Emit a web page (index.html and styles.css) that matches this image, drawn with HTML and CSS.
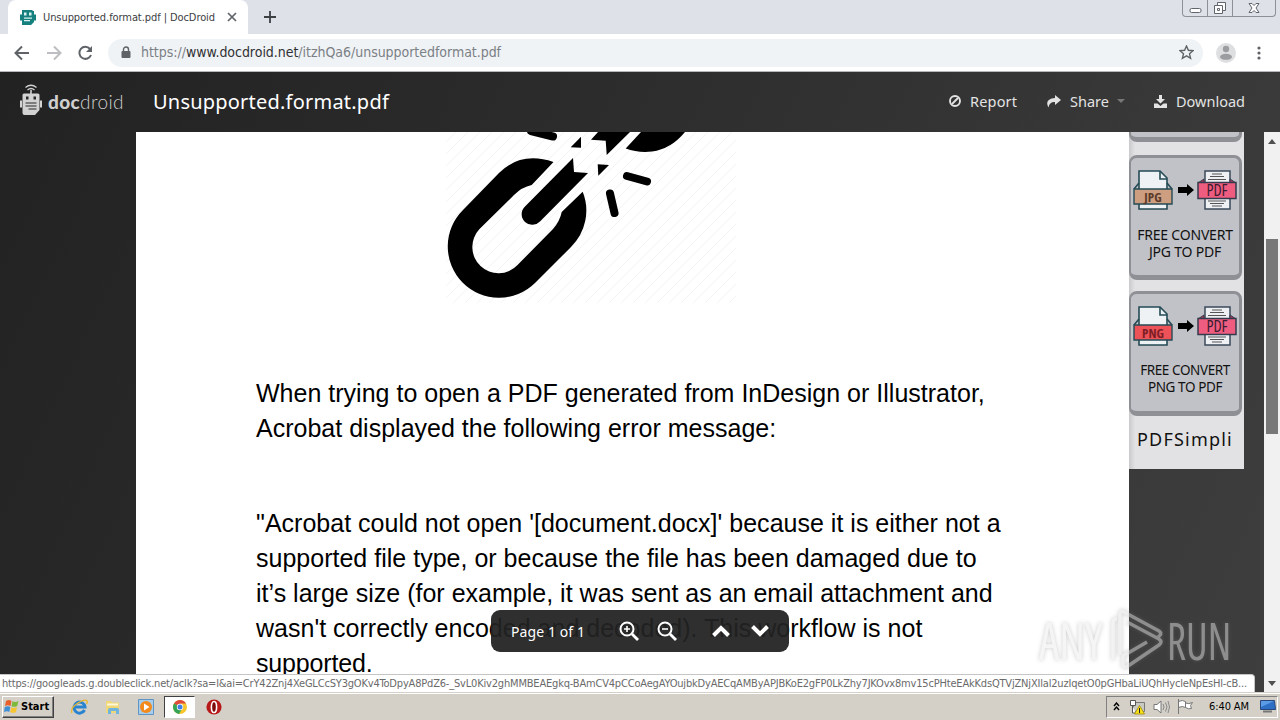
FILE: index.html
```html
<!DOCTYPE html>
<html lang="en">
<head>
<meta charset="utf-8">
<title>Unsupported.format.pdf | DocDroid</title>
<link rel="stylesheet" href="styles.css">
</head>
<body>
<svg class="defs" width="0" height="0">
  <defs>
    <symbol id="robot" viewBox="0 0 22 32">
      <path d="M5.500 3.500Q11 -1 16.500 3.500M7.500 6Q11 3 14.500 6" fill="none" stroke="currentColor" stroke-width="1.300"/>
      <path d="M10.200 6h1.600v4h-1.600zM4 9.500h14q1.500 0 1.500 1.500v15l-4.500 5H4.500q-2 0-2-2V11q0-1.500 1.500-1.500zM0 16.500h2v7H0zM20 16.500h2v7h-2z" fill="currentColor"/>
      <path d="M6 12.500h2.500v3H6zM13.500 12.500H16v3h-2.500zM5.500 18.500h11v1h-11zM5.500 21.500h11v1h-11zM8.500 24.500h8v1h-8z"/>
    </symbol>
    <symbol id="robot-small" viewBox="0 0 16 17">
      <path d="M2 1h10.500v1h1.500v11l-3 3H2zM0 5.500h16v6H0z" fill="currentColor"/>
      <path d="M4 3.500h2.500v3H4zM9 3.500h2.500v3H9zM4 8.500h8v1.200H4zM4 11h6v1.200H4z"/>
    </symbol>
    <symbol id="pdf" viewBox="0 0 40 40">
      <path d="M8 1h25v38H8z" fill="#eef0f3" stroke="#3b4a5c" stroke-width="1.500"/>
      <path d="M15 4h10M13 6.500h14M11 9.500h18M11 31h18M13 33.500h14M15 36h10" stroke="#555" stroke-width="1.200"/>
      <path d="M1 13l6-4v4M39 13l-6-4v4" fill="#b5375a" stroke="#333b4c"/>
      <path d="M1 12.500h38v16H1z" fill="#ee5d80" stroke="#333b4c" stroke-width="1.500"/>
    </symbol>
    <symbol id="file" viewBox="0 0 40 40">
      <path d="M6 1h21l7 7v31H6z" fill="#eef2f4" stroke="#254b55" stroke-width="1.600"/>
      <path d="M27 1v8h7M1 19l5-6M39 19l-5-6" fill="none" stroke="#254b55" stroke-width="1.600"/>
      <path d="M1 19h38v15H1z" fill="currentColor" stroke="#254b55" stroke-width="1.400"/>
    </symbol>
  </defs>
</svg>

<div class="tabstrip">
  <div class="tab">
    <svg class="favicon" width="16" height="17"><use href="#robot-small"/></svg>
    <span class="tab-title">Unsupported.format.pdf | DocDroid</span>
    <svg class="tab-close" width="10" height="10" viewBox="0 0 10 10"><path d="M1 1l8 8M9 1l-8 8" stroke="#5f6368" stroke-width="1.700"/></svg>
  </div>
  <svg class="newtab" width="12" height="12" viewBox="0 0 12 12"><path d="M6 0v12M0 6h12" stroke="#3c4043" stroke-width="1.800"/></svg>
  <div class="winbtns">
    <span class="wb wb-s"><svg width="13" height="16" viewBox="0 0 13 16"><rect x="1" y="8.500" width="11" height="4" rx="1.500" fill="#fff" stroke="#62656e"/></svg></span>
    <span class="wb wb-s"><svg width="14" height="16" viewBox="0 0 14 16"><path d="M4.500 2.500h8v8h-8z" fill="#fff" stroke="#62656e"/><path d="M1.500 5.500h8v8h-8zM4.500 8.500h2v2h-2z" fill="#fff" stroke="#62656e"/></svg></span>
    <span class="wb wb-l"><svg width="12" height="16" viewBox="0 0 12 16"><path d="M1 3.500h3l2 2 2-2h3L8 8l3 4.500H8l-2-2-2 2H1L4 8z" fill="#fff" stroke="#62656e"/></svg></span>
  </div>
</div>

<div class="toolbar">
  <svg class="nav" width="84" height="20" viewBox="0 0 84 20">
    <g fill="none" stroke="#5f6368" stroke-width="2"><path d="M15 10H2M8 3.500L1.500 10 8 16.500"/><path d="M33 10h13M40 3.500l6.500 6.500-6.500 6.500" stroke="#bcbec1"/><path d="M76 6A6 6 0 1 0 77 12"/></g>
    <path d="M78 3v6h-6z" fill="#5f6368"/>
  </svg>
  <div class="omnibox">
    <svg width="10" height="13" viewBox="0 0 10 13"><path d="M2.500 6V3.500a2.500 2.500 0 0 1 5 0V6" fill="none" stroke="#5f6368" stroke-width="1.400"/><rect x=".5" y="5" width="9" height="7" rx="1" fill="#5f6368"/></svg>
    <span class="url">https://<b>www.docdroid.net</b>/itzhQa6/unsupportedformat.pdf</span>
    <svg class="star" width="15" height="15" viewBox="0 0 15 15"><path d="M7.500 1l1.900 4.300 4.700.4-3.600 3.100 1.100 4.600-4.100-2.500-4.100 2.500 1.100-4.600L.9 5.700l4.700-.4z" fill="none" stroke="#5f6368" stroke-width="1.400"/></svg>
  </div>
  <svg width="20" height="20" viewBox="0 0 20 20"><circle cx="10" cy="10" r="10" fill="#dedfe1"/><circle cx="10" cy="6" r="3.200" fill="#9b9da0"/><ellipse cx="10" cy="13.800" rx="6" ry="3" fill="#9b9da0"/></svg>
  <svg class="dots" width="4" height="14" viewBox="0 0 4 14"><g fill="#5f6368"><circle cx="2" cy="2" r="1.600"/><circle cx="2" cy="7" r="1.600"/><circle cx="2" cy="12" r="1.600"/></g></svg>
</div>

<main class="viewer">
  <header class="docbar">
    <svg class="logo" width="22" height="32"><use href="#robot"/></svg>
    <span class="brand"><b>doc</b>droid</span>
    <h1 class="title">Unsupported.format.pdf</h1>
    <nav class="actions">
      <svg width="12" height="12" viewBox="0 0 12 12"><circle cx="6" cy="6" r="5" fill="none" stroke="currentColor" stroke-width="1.900"/><path d="M3 9l6-6" stroke="currentColor" stroke-width="1.800"/></svg>
      <span class="act a-report">Report</span>
      <svg width="15" height="13" viewBox="0 0 15 13"><path d="M9 0l6 5-6 5V7Q3.500 6.500 2.500 12.500 -2 4 9 3z" fill="currentColor"/></svg>
      <span class="act a-share">Share</span>
      <svg class="caret" width="8" height="4" viewBox="0 0 8 4"><path d="M0 0h8L4 4z" fill="#777"/></svg>
      <svg width="13" height="13" viewBox="0 0 13 13"><path d="M5 0h3v4h3L6.500 8.500 2 4h3zM0 8.500h3.500l3 2.500 3-2.500H13V13H0z" fill="currentColor"/></svg>
      <span class="act a-dl">Download</span>
    </nav>
  </header>
  <div class="stage">
    <article class="paper">
      <svg class="chain" width="290" height="171" viewBox="446 132 290 171">
        <defs><pattern id="hatch" width="12" height="12" patternUnits="userSpaceOnUse"><path d="M-1 13L13 -1" stroke="#f4f4f4" stroke-width="1"/></pattern></defs>
        <path d="M446 132h290v171H446z" fill="url(#hatch)"/>
        <path d="M553.500 162Q521 151 499 173L463 210A51 51 0 0 0 535 283L571 247A51 51 0 0 0 582.700 191.700L561.700 212Q560 221 553 229L517.500 265A26 26 0 0 1 479.500 229L514 195Q522 187 531.700 185Z"/>
        <path d="M573 158L524.500 207A10.500 10.500 0 0 0 540 221.500L588 173 574 172Z"/>
        <path d="M570.700 147.300L581 136.700V147.700ZM597.700 164.300L609 165 598.300 175.700ZM598 132H630L606.700 155 605.700 140.700 591 139.700ZM641 132L625.700 148.500Q638 153 652 151.500 671 149 685 132Z"/>
        <path d="M627 176L647 181.500M610 193.500L614.500 213M531 131L553 136.500" stroke="#000" stroke-width="8" stroke-linecap="round"/>
      </svg>
      <p class="para"><span>When trying to open a PDF generated from InDesign or Illustrator,</span><br><span>Acrobat displayed the following error message:</span></p>
      <p class="para"><span>"Acrobat could not open '[document.docx]' because it is either not a</span><br><span>supported file type, or because the file has been damaged due to</span><br><span>it’s large size (for example, it was sent as an email attachment and</span><br><span>wasn't correctly encoded and decoded). This workflow is not</span><br><span class="last">supported.</span></p>
    </article>
    <aside class="ad">
      <div class="card card-cut"></div>
      <div class="card">
        <div class="convert"><span class="fmt jpg"><svg width="40" height="40"><use href="#file"/></svg><i>JPG</i></span><svg class="arrow" width="16" height="12" viewBox="0 0 16 12"><path d="M0 3h9V0l7 6-7 6V9H0z"/></svg><span class="fmt pdf"><svg width="40" height="40"><use href="#pdf"/></svg><i>PDF</i></span></div>
        <div class="cap">FREE CONVERT<br>JPG TO PDF</div>
      </div>
      <div class="card card-png">
        <div class="convert"><span class="fmt png"><svg width="40" height="40"><use href="#file"/></svg><i>PNG</i></span><svg class="arrow" width="16" height="12" viewBox="0 0 16 12"><path d="M0 3h9V0l7 6-7 6V9H0z"/></svg><span class="fmt pdf"><svg width="40" height="40"><use href="#pdf"/></svg><i>PDF</i></span></div>
        <div class="cap">FREE CONVERT<br>PNG TO PDF</div>
      </div>
      <div class="simpli">PDFSimpli</div>
    </aside>
    <div class="scrollbar">
      <svg width="8" height="5" viewBox="0 0 8 5"><path d="M0 5l4-5 4 5z" fill="#505050"/></svg>
      <div class="thumb"></div>
      <svg class="down" width="8" height="5" viewBox="0 0 8 5"><path d="M0 0l4 5 4-5z" fill="#505050"/></svg>
    </div>
  </div>
  <div class="pager">
    <span class="pg">Page 1 of 1</span>
    <svg class="zi" width="20" height="20" viewBox="0 0 20 20"><g fill="none" stroke="#fff" stroke-width="2"><circle cx="8" cy="8" r="6.500"/><path d="M13 13l6 6" stroke-width="2.800"/><path d="M8 5v6M5 8h6" stroke-width="1.600"/></g></svg>
    <svg class="zo" width="20" height="20" viewBox="0 0 20 20"><g fill="none" stroke="#fff" stroke-width="2"><circle cx="8" cy="8" r="6.500"/><path d="M13 13l6 6" stroke-width="2.800"/><path d="M5 8h6" stroke-width="1.600"/></g></svg>
    <svg class="up" width="18" height="12" viewBox="0 0 18 12"><path d="M1.500 10.500L9 3l7.500 7.500" fill="none" stroke="#fff" stroke-width="4"/></svg>
    <svg class="dn" width="18" height="12" viewBox="0 0 18 12"><path d="M1.500 1.500L9 9l7.500-7.500" fill="none" stroke="#fff" stroke-width="4"/></svg>
  </div>
  <div class="watermark">
    <span class="wm wm-any">ANY</span>
    <svg width="54" height="62" viewBox="0 0 54 62"><defs><linearGradient id="wmg" gradientUnits="userSpaceOnUse" x1="0" y1="0" x2="54" y2="0"><stop offset="0" stop-color="#f0f0f0"/><stop offset=".34" stop-color="#e8e8e8"/><stop offset=".36" stop-color="#aaa"/></linearGradient></defs><g fill="none" stroke="url(#wmg)" stroke-width="3.500" stroke-linejoin="round"><path d="M3 51V14q0-4 4-4M10 46V5q0-4 4-2l35 19q4 3-1 6"/><path d="M17 13l32 17q4 3 0 6L18 57q-5 3-5-2v-8l24-14"/></g></svg>
    <span class="wm wm-run">RUN</span>
  </div>
  <div class="status">https://googleads.g.doubleclick.net/aclk?sa=l&amp;ai=CrY42Znj4XeGLCcSY3gOKv4ToDpyA8PdZ6-_SvL0Kiv2ghMMBEAEgkq-BAmCV4pCCoAegAYOujbkDyAECqAMByAPJBKoE2gFP0LkZhy7JKOvx8mv15cPHteEAkKdsQTVjZNjXIlal2uzIqetO0pGHbaLiUQhHycleNpEsHl-cB...</div>
</main>

<footer class="taskbar">
  <div class="start">
    <svg width="16" height="15" viewBox="0 0 16 15"><path d="M2 2q3-2 5.500 0L6.500 7Q3.500 5.500 1 7z" fill="#e8612c"/><path d="M8.500 2.300q3 1.700 6-.3L13.200 7q-3 1.700-5.700 0z" fill="#7fb93c"/><path d="M.8 8q3-1.500 5.500 0L5.300 13Q3 11.500 0 13z" fill="#3f8fd6"/><path d="M7.300 8.300q2.700 1.500 5.700-.2L12 13q-3 1.700-5.700 0z" fill="#f6c52f"/></svg>
    <b>Start</b>
  </div>
  <div class="quick">
    <svg class="q1" width="17" height="16" viewBox="0 0 17 16"><path d="M13.500 11A5.500 5.500 0 1 1 14 8H4" fill="none" stroke="#2a83cf" stroke-width="3"/><path d="M1 14Q-1 9 7 4q7-4.500 9-2 .8 1-.5 3" fill="none" stroke="#e9b52c" stroke-width="1.300"/></svg>
    <svg class="q2" width="16" height="16" viewBox="0 0 16 16"><path d="M1 2h5l1 1.500h7V14H1z" fill="#f0d878"/><path d="M2 4.500h11v2H2z" fill="#fff8d8"/><path d="M3 15v-4q0-2 2-2h7q2 0 2 2v4h-3v-3H6v3z" fill="#6fb4dc"/></svg>
    <svg class="q3" width="16" height="16" viewBox="0 0 16 16"><path d="M.5.500h15v15H.5z" fill="#a8cdea" stroke="#5e95c4"/><circle cx="8" cy="8" r="6" fill="#f28a1c"/><path d="M6 4.500L11.500 8 6 11.500z" fill="#fff"/></svg>
    <span class="running"><svg width="14" height="14" viewBox="0 0 14 14"><circle cx="7" cy="7" r="7" fill="#f6c62c"/><path d="M7 7L1 3.500A7 7 0 0 1 13 3.500H7z" fill="#de4a3c"/><path d="M7 7L1 3.500A7 7 0 0 0 6 14L9 9z" fill="#35a455"/><circle cx="7" cy="7" r="3.200" fill="#fff"/><circle cx="7" cy="7" r="2.500" fill="#3f7fe6"/></svg></span>
    <svg class="q5" width="16" height="16" viewBox="0 0 16 16"><circle cx="8" cy="8" r="7.600" fill="#b81a1a"/><ellipse cx="8" cy="8" rx="2.600" ry="5.500" fill="#7d0b0b" stroke="#fff" stroke-width="1.600"/></svg>
  </div>
  <div class="tray">
    <svg width="7" height="9" viewBox="0 0 7 9"><path d="M1 4l2.500-3L6 4M1 8l2.500-3L6 8" fill="none" stroke="#000" stroke-width="1.400"/></svg>
    <svg class="t2" width="17" height="16" viewBox="0 0 17 16"><path d="M4.500 3.500h11v9h-11z" fill="#c9c9c4" stroke="#777"/><path d="M1.500 1.500h5v5h-5zM3.500 6v8h3" fill="#fff" stroke="#555"/><path d="M10.500 6.500L15.500 15h-10z" fill="#f8e11c" stroke="#a18c00" stroke-width=".8"/><path d="M10.500 9v5" stroke="#222"/></svg>
    <svg class="t3" width="17" height="14" viewBox="0 0 17 14"><path d="M1 4.500h3L8 1v12L4 9.500H1z" fill="#fff" stroke="#777"/><path d="M10 4q2 3 0 6M12.500 2.500q3 4.500 0 9M15 1q3 6 0 12" fill="none" stroke="#888"/></svg>
    <svg class="t4" width="17" height="15" viewBox="0 0 17 15"><path d="M1.500 0v15M1.500 2.500q4-2 7 0v6q-3-2-7 0zM8.500 4q3 1.500 7-.5l-2 3 1 3q-3 1-6-1" fill="#fff" stroke="#777"/></svg>
    <span class="clock">6:40 AM</span>
    <svg class="t5" width="16" height="13" viewBox="0 0 16 13"><path d="M.5.500h14l1 9H.5z" fill="#2d6fc4" stroke="#26477c"/><path d="M1 1h13L1 7z" fill="#5b9be6"/><path d="M3 11.500h9" stroke="#777" stroke-width="2"/></svg>
  </div>
</footer>
</body>
</html>
```
FILE: styles.css
```css
*{box-sizing:border-box}
body{margin:0;width:1280px;height:720px;overflow:hidden;display:flex;flex-direction:column;font-family:"DejaVu Sans Condensed","DejaVu Sans",sans-serif;font-size:11px;background:#fff}
svg{display:block;flex:none}
.defs{position:absolute}
span{white-space:nowrap}
.tabstrip{height:34px;background:#dee1e8;display:flex;align-items:flex-start;flex:none}
.tab{margin-left:8px;width:240px;height:34px;background:#fff;border-radius:8px 8px 0 0;display:flex;align-items:center;padding-left:12px}
.favicon{color:#16807f;fill:#d9f3f0}
.tab-title{margin-left:7px;color:#3c4043;letter-spacing:-.075px}
.tab-close{margin-left:auto;margin-right:11px}
.newtab{margin:11px 0 0 16px}
.winbtns{margin-left:auto;margin-right:4px;display:flex;border:1px solid #8d9099;border-top:0;border-radius:0 0 4px 4px;height:17px}
.wb{display:flex;justify-content:center}
.wb-s{width:25px;border-right:1px solid #8d9099}
.wb-l{width:42px}
.toolbar{height:38px;border-bottom:1px solid #b5b7ba;display:flex;align-items:center;flex:none;padding-left:14px}
.nav{margin-right:10px}
.omnibox{width:1095px;height:28px;border-radius:14px;background:#f0f3f5;display:flex;align-items:center;padding:0 9px 0 13px;margin-right:13px}
.url{margin:-2px 0 0 10px;font:400 14px "DejaVu Sans Condensed","DejaVu Sans",sans-serif;color:#7b8085;letter-spacing:-.033px}
.url b{font-weight:400;color:#303134}
.star{margin-left:auto}
.dots{margin-left:21px}
.viewer{flex:1;min-height:0;position:relative;display:flex;flex-direction:column;background:linear-gradient(115deg,#222 0%,#2b2b2b 35%,#383838 75%,#3e3e3e 100%)}
.docbar{height:60px;flex:none;display:flex;align-items:center;padding-left:20px;color:#e3e3e3}
.logo{fill:#282828;color:#d2d2d2;margin-top:-4px}
.brand{margin:-2px 0 0 6px;width:77px;font:300 19px Lato,sans-serif;color:#cfcfcf;letter-spacing:.35px}
.brand b{font-weight:900}
.title{margin:-1px 0 0 28px;font:400 20px "Noto Sans",sans-serif;color:#fff;letter-spacing:.215px}
.actions{margin:-2px 35px 0 auto;display:flex;align-items:center}
.act{font:14.500px "Noto Sans",sans-serif;margin-left:9px}
.a-report{margin-right:29px;letter-spacing:.14px}
.a-share{margin-right:8px}
.caret{margin-right:29px}
.stage{flex:1;min-height:0;display:flex;padding-left:136px;overflow:hidden}
.paper{width:993px;background:#fff;padding-left:120px;flex:none}
.chain{margin-left:190px}
.para{margin:73px 0 0;font:25px/35px "Liberation Sans",Arial,sans-serif;color:#000;letter-spacing:.01px}
.para + .para{margin-top:60px}
.last{letter-spacing:-.15px}
.ad{width:115px;height:337px;background:linear-gradient(90deg,#c9c9cb,#e2e2e4 6px);flex:none}
.card{width:113px;height:125px;background:#c1c2c7;border:3px solid #8f9095;border-bottom-width:5px;border-left-width:2px;border-radius:8px;margin-bottom:11px}
.card-cut{height:10px;border-top:0;border-radius:0 0 8px 8px;margin-bottom:13px}
.convert{display:flex;align-items:center;padding:12px 0 0 2px}
.arrow{margin:0 3px 0 5px}
.fmt{position:relative}
.fmt i{position:absolute;left:0;width:40px;text-align:center;font:700 13px/14px "Open Sans",sans-serif;font-stretch:75%;top:20px;color:#5a3a2a}
.jpg{color:#cd9e80}.png{color:#ec5257}
.png i{color:#7e1d25}
.fmt.pdf i{top:13px;font-weight:500;font-size:16px;line-height:15px;color:#3b1c31}
.cap{font:14px/17px "Noto Sans",sans-serif;text-align:center;margin-top:16px;color:#111;letter-spacing:-.2px}
.card-png .cap{font-size:13.500px;letter-spacing:-.4px}
.simpli{font:18px/24px "Noto Sans",sans-serif;margin:11px 0 0 8px;color:#111;letter-spacing:1.2px}
.scrollbar{margin-left:auto;width:16px;background:#f1f1f1;display:flex;flex-direction:column;align-items:center;padding:7px 0 6px}
.thumb{width:12px;height:195px;flex:none;background:#787878;margin-top:95px}
.down{margin-top:auto}
.pager{position:absolute;left:491px;top:538px;width:298px;height:42px;border-radius:9px;background:rgba(34,34,34,.94);display:flex;align-items:center;padding-left:20px}
.pg{font:14px "Noto Sans",sans-serif;color:#fff;letter-spacing:.085px;width:74px}
.zi{margin-left:34px}.zo{margin-left:18px}.up{margin-left:35px}.dn{margin-left:21px}
.watermark{position:absolute;left:1039px;top:537px;display:flex;align-items:center;opacity:.75;filter:drop-shadow(0 0 2px rgba(120,120,120,.5))}
.wm{font:51px/60px "Open Sans",sans-serif;font-stretch:75%;transform-origin:0 50%}
.wm-any{color:#f2f2f2;width:71px;transform:scaleX(.9)}
.wm-run{color:#aaa;margin-left:3px;transform:scaleX(.82)}
.status{position:absolute;left:0;bottom:0;width:1255px;height:18px;background:#fff;border:1px solid #c5c5c5;border-left:0;border-bottom:0;border-radius:0 4px 0 0;padding-left:2px;font-size:11px;line-height:17px;color:#6a6a6a;letter-spacing:-.186px;white-space:nowrap}
.taskbar{height:28px;flex:none;background:#d4d0c8;border-top:1px solid #d4d0c8;box-shadow:inset 0 1px #fff;display:flex;align-items:center;padding-left:2px}
.start{width:52px;height:22px;border:1px solid;border-color:#fff #404040 #404040 #fff;box-shadow:inset -1px -1px #808080;display:flex;align-items:center;padding-left:1px}
.start b{margin-left:1px;font-size:11px}
.quick{display:flex;align-items:center;margin-left:17px}
.q2{margin-left:17px}.q3{margin-left:17px}.q5{margin-left:11px}
.running{width:31px;height:22px;margin-left:10px;background:#fff;border:1px solid;border-color:#404040 #fff #fff #404040;display:flex;align-items:center;justify-content:center}
.tray{margin-left:auto;margin-right:2px;height:22px;width:172px;border:1px solid;border-color:#808080 #fff #fff #808080;display:flex;align-items:center;padding-left:6px}
.t2{margin-left:9px}.t3{margin-left:7px}.t4{margin-left:7px}.clock{margin-left:15px;letter-spacing:-.1px}.t5{margin-left:11px}
```
